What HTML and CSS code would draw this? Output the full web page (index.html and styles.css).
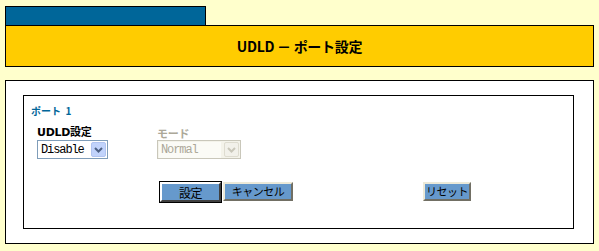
FILE: index.html
```html
<html>
<head>
    <link rel="stylesheet" href="styles.css">
</head>
<body>
    <div class="tab"></div>
    <div class="header">UDLD － ポート設定</div>

    <div class="outer">
        <div class="inner">
            <div class="port-title">ポート&nbsp; 1</div>

            <div class="fields">
                <div class="field">
                    <div class="label">UDLD設定</div>
                    <div class="select select-udld">
                        <span class="select-text">Disable</span>
                        <span class="select-arrow">
                            <svg width="9" height="6" viewBox="0 0 9 6"><path d="M1 1 L4.5 4.5 L8 1" fill="none" stroke="#4d6185" stroke-width="2"/></svg>
                        </span>
                    </div>
                </div>
                <div class="field">
                    <div class="label label-off">モード</div>
                    <div class="select select-mode off">
                        <span class="select-text">Normal</span>
                        <span class="select-arrow">
                            <svg width="9" height="6" viewBox="0 0 9 6"><path d="M1 1 L4.5 4.5 L8 1" fill="none" stroke="#c9c7ba" stroke-width="2"/></svg>
                        </span>
                    </div>
                </div>
            </div>

            <div class="buttons">
                <button class="btn btn-default">設定</button>
                <button class="btn btn-cancel">キャンセル</button>
                <button class="btn btn-reset">リセット</button>
            </div>
        </div>
    </div>
</body>
</html>
```

FILE: styles.css
```css
/* Pagina */
body {
    margin: 0;
    padding: 6px 5px 0 5px;
    background-color: #ffffcc;
    font-family: "DejaVu Sans", "Noto Sans CJK JP", sans-serif;
}

/* Pestaña azul */
.tab {
    width: 199px;
    height: 18px;
    background-color: #006699;
    border: 1px solid #000;
    border-bottom: none;
}

/* Cabecera amarilla */
.header {
    height: 40px;
    line-height: 40px;
    background-color: #ffcc00;
    border: 1px solid #000;
    text-align: center;
    font-family: "Noto Sans CJK JP", sans-serif;
    font-size: 14px;
    font-weight: bold;
    color: #000;
    letter-spacing: -0.3px;
}

/* Cajas */
.outer {
    margin-top: 13px;
    height: 148px;
    background-color: #fff;
    border: 1px solid #000;
    padding: 14px 19px 0 17px;
}

.inner {
    height: 132px;
    border: 1px solid #000;
    padding: 0 0 0 7px;
}

.port-title {
    margin-top: 8px;
    height: 13px;
    font-size: 10px;
    font-weight: bold;
    color: #006699;
    font-family: "Noto Sans CJK JP", sans-serif;
    line-height: 13px;
}

.fields {
    display: flex;
    margin-top: 9px;
    padding-left: 6px;
}

.field {
    width: 120px;
}

.label {
    height: 14px;
    line-height: 14px;
    font-size: 11px;
    font-weight: bold;
    color: #000;
    font-family: "DejaVu Sans", "Noto Sans CJK JP", sans-serif;
    letter-spacing: -0.3px;
}

.label-off {
    color: #aca899;
    font-family: "Noto Sans CJK JP", sans-serif;
}

/* Selects */
.select {
    display: flex;
    align-items: center;
    justify-content: space-between;
    height: 17px;
    border: 1px solid #7f9db9;
    background-color: #fff;
    padding: 0 1px 0 3px;
}

.select-udld {
    width: 65px;
}

.select-mode {
    width: 80px;
}

.select-text {
    font-family: "Liberation Mono", monospace;
    font-size: 12px;
    letter-spacing: -1.1px;
    color: #000;
}

.select-arrow {
    display: flex;
    align-items: center;
    justify-content: center;
    width: 13px;
    height: 13px;
    background-color: #c1d3fb;
    border: 1px solid #b1c4f0;
    border-radius: 2px;
}

.off {
    border-color: #c9c7ba;
    background-color: #f4f3ea;
    padding-left: 1px;
}

.off .select-text {
    color: #aca899;
    background-color: #fbfbf6;
    padding: 1px 2px;
    width: 58px;
}

.off .select-arrow {
    background-color: #f2f1ea;
    border-color: #dedcd0;
    margin-left: 2px;
}

/* Botones */
.buttons {
    display: flex;
    margin-top: 23px;
    padding-left: 129px;
}

.btn {
    height: 19px;
    padding: 0;
    font-family: "Noto Sans CJK JP", sans-serif;
    font-size: 11px;
    line-height: 13px;
    white-space: nowrap;
    letter-spacing: -0.5px;
    color: #000;
    background-color: #6699cc;
    border: 2px solid;
    border-color: #ece9d8 #716f64 #716f64 #ece9d8;
}

.btn-default {
    width: 61px;
    height: 20px;
    border-width: 2px;
    border-color: #fff #404040 #404040 #fff;
    box-shadow: 0 0 0 1px #000;
    font-size: 12px;
}

.btn-cancel {
    width: 70px;
    margin-left: 2px;
}

.btn-reset {
    width: 48px;
    margin-left: 130px;
}
```
